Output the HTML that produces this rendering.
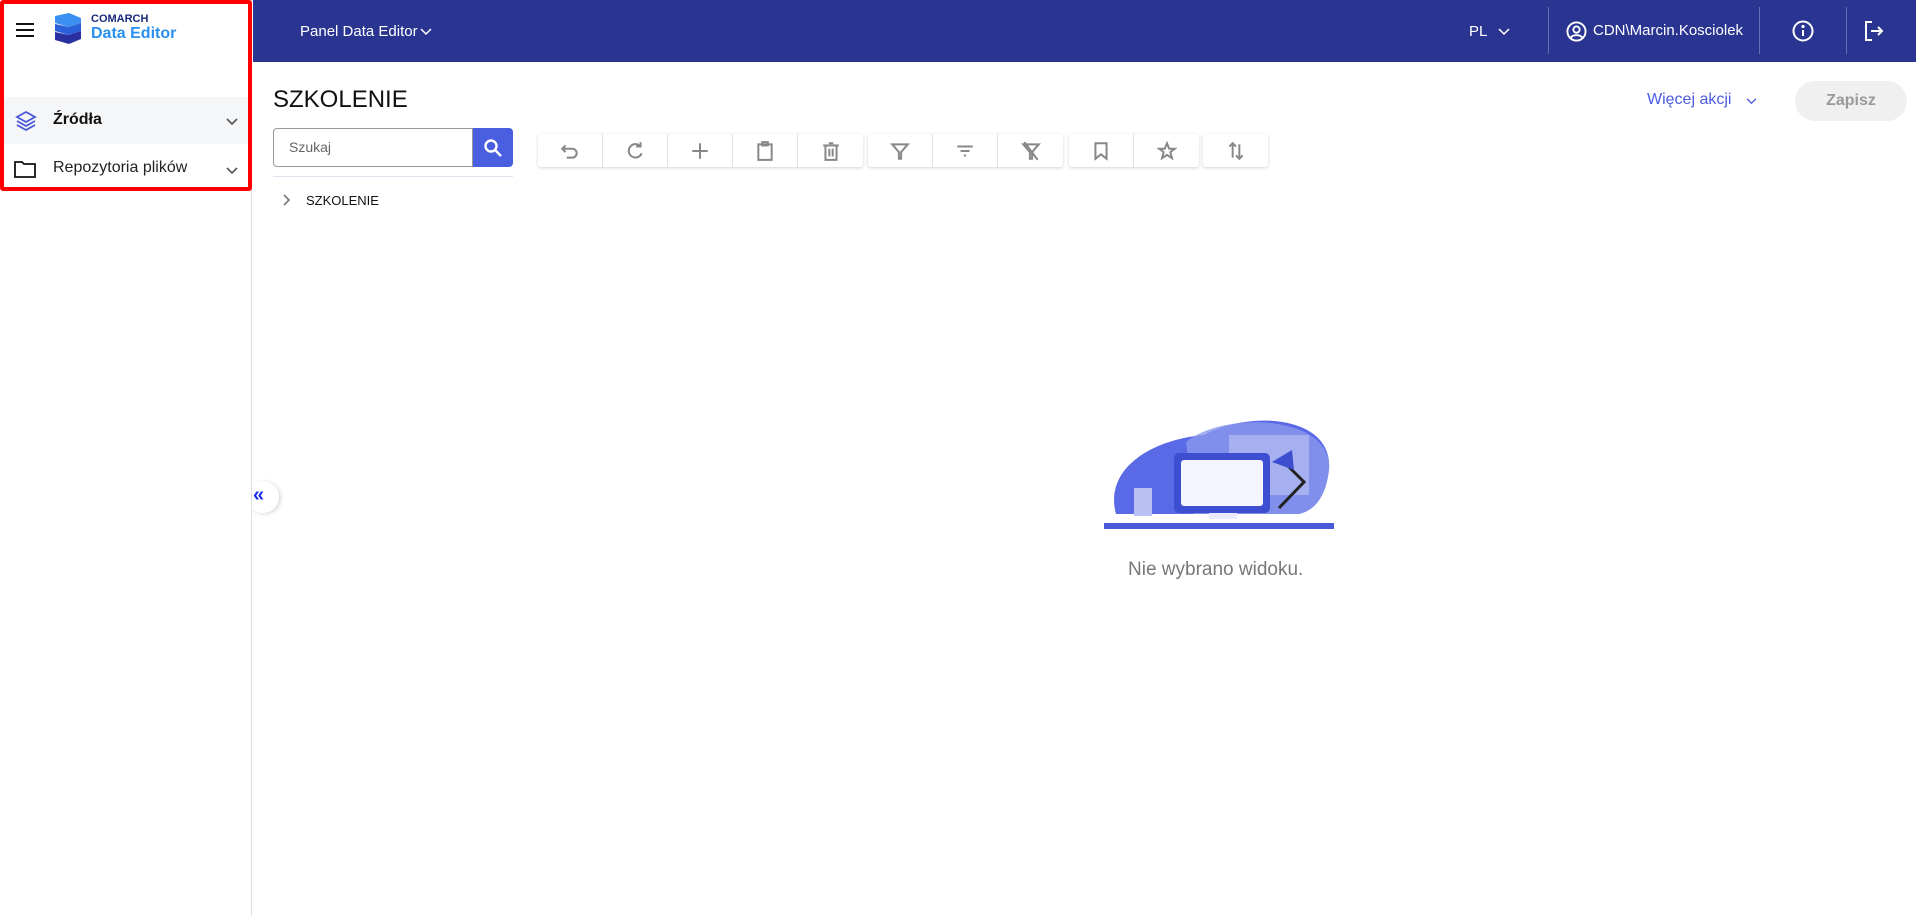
<!DOCTYPE html>
<html><head><meta charset="utf-8"><style>
*{box-sizing:border-box;margin:0;padding:0}
body{width:1916px;height:916px;overflow:hidden;background:#fff;font-family:"Liberation Sans",Arial,sans-serif;position:relative;color:#222}
.abs{position:absolute}
.hdr{left:253px;top:0;width:1663px;height:62px;background:#2a3592}
.side{left:0;top:0;width:252px;height:916px;border-right:1px solid #e0e0e0;background:#fff}
.wt{color:#fff;font-size:15px}
.vd{width:1px;background:#6670b0;top:7px;height:47px}
.tb{top:134px;height:33px;background:#fff;border-radius:3px;box-shadow:0 1px 3px rgba(0,0,0,.18);display:flex}
.tb div{width:65px;height:33px;border-right:1px solid #e2e2e2;display:flex;align-items:center;justify-content:center}
.tb div:last-child{border-right:none}
svg.i{width:20px;height:20px;fill:none;stroke:#888;stroke-width:1.8}
</style></head><body>
<div class="abs side"></div>
<div class="abs" style="left:0;top:0;width:252px;height:191px;border:4px solid #f00;border-radius:3px"></div>
<div class="abs" style="left:16px;top:23px;width:18px;height:2px;background:#111;box-shadow:0 6px 0 #111,0 12px 0 #111"></div>
<svg class="abs" style="left:53px;top:13px" width="30" height="31" viewBox="0 0 30 31"><path d="M2 3 L16 0 L28 5 L28 10 L16 14 L2 10Z" fill="#3a8ff0"/><path d="M2 11 L16 14 L28 10 L28 18 L16 22 L2 18Z" fill="#2a5fd8"/><path d="M2 19 L16 22 L28 18 L28 26 L16 31 L2 27Z" fill="#2a2fa0"/></svg>
<div class="abs" style="left:91px;top:13px;font-size:11px;font-weight:bold;color:#1b2a7a">COMARCH</div>
<div class="abs" style="left:91px;top:25px;font-size:16px;color:#2a8ff0;font-weight:bold">Data Editor</div>
<div class="abs" style="left:4px;top:97px;width:244px;height:47px;background:#f5f6f8"></div>
<svg class="abs" style="left:15px;top:110px" width="22" height="22" viewBox="0 0 22 22" fill="none" stroke="#4a57d8" stroke-width="1.8"><path d="M11 2 L20 7 L11 12 L2 7Z"/><path d="M2 11 L11 16 L20 11"/><path d="M2 15 L11 20 L20 15"/></svg>
<div class="abs" style="left:53px;top:111px;font-size:16px;font-weight:bold;color:#111">Źródła</div>
<svg class="abs" style="left:226px;top:118px" width="12" height="8" viewBox="0 0 12 8"><path d="M1 1 L6 6 L11 1" fill="none" stroke="#555" stroke-width="1.6"/></svg>
<svg class="abs" style="left:14px;top:160px" width="22" height="18" viewBox="0 0 22 18" fill="none" stroke="#111" stroke-width="1.8"><path d="M1 2 H8 L10 4 H21 V17 H1Z"/></svg>
<div class="abs" style="left:53px;top:159px;font-size:16px;color:#222">Repozytoria plików</div>
<svg class="abs" style="left:226px;top:167px" width="12" height="8" viewBox="0 0 12 8"><path d="M1 1 L6 6 L11 1" fill="none" stroke="#555" stroke-width="1.6"/></svg>
<div class="abs" style="left:247px;top:481px;width:32px;height:32px;border-radius:50%;background:#fff;box-shadow:2px 1px 4px rgba(0,0,0,.15)"></div>
<div class="abs" style="left:240px;top:470px;width:12px;height:60px;background:#fff;border-right:1px solid #e0e0e0"></div>
<div class="abs" style="left:253px;top:484px;font-size:20px;color:#1a2ee8;font-weight:bold">«</div>
<div class="abs hdr"></div>
<div class="abs wt" style="left:300px;top:23px">Panel Data Editor</div>
<svg class="abs" style="left:420px;top:28px" width="12" height="8" viewBox="0 0 12 8"><path d="M1 1 L6 6 L11 1" fill="none" stroke="#fff" stroke-width="1.5"/></svg>
<div class="abs wt" style="left:1469px;top:23px">PL</div>
<svg class="abs" style="left:1498px;top:28px" width="12" height="8" viewBox="0 0 12 8"><path d="M1 1 L6 6 L11 1" fill="none" stroke="#fff" stroke-width="1.5"/></svg>
<div class="abs vd" style="left:1548px"></div>
<svg class="abs" style="left:1566px;top:21px" width="21" height="21" viewBox="0 0 22 22" fill="none" stroke="#fff" stroke-width="2"><circle cx="11" cy="11" r="9.5"/><circle cx="11" cy="9" r="3.3"/><path d="M5 17.5 C7 14 15 14 17 17.5"/></svg>
<div class="abs wt" style="left:1593px;top:22px">CDN\Marcin.Kosciolek</div>
<div class="abs vd" style="left:1759px"></div>
<svg class="abs" style="left:1792px;top:20px" width="22" height="22" viewBox="0 0 22 22" fill="none" stroke="#fff" stroke-width="2"><circle cx="11" cy="11" r="9.5"/><path d="M11 10 V16"/><circle cx="11" cy="6.5" r=".6" fill="#fff"/></svg>
<div class="abs vd" style="left:1846px"></div>
<svg class="abs" style="left:1864px;top:21px" width="20" height="20" viewBox="0 0 20 20" fill="none" stroke="#fff" stroke-width="2"><path d="M8 1 H2 V19 H8"/><path d="M7 10 H18 M14 6 L18 10 L14 14"/></svg>
<div class="abs" style="left:273px;top:86px;font-size:24px;color:#111">SZKOLENIE</div>
<div class="abs" style="left:1647px;top:91px;font-size:16px;color:#4b5be0">Więcej akcji</div>
<svg class="abs" style="left:1746px;top:98px" width="11" height="7" viewBox="0 0 12 8"><path d="M1 1 L6 6 L11 1" fill="none" stroke="#4b5be0" stroke-width="1.5"/></svg>
<div class="abs" style="left:1795px;top:81px;width:112px;height:40px;border-radius:20px;background:#f0f0f0;color:#999;font-size:16px;font-weight:bold;text-align:center;line-height:40px">Zapisz</div>
<div class="abs" style="left:273px;top:128px;width:200px;height:39px;border:1px solid #999;border-radius:4px 0 0 4px"></div>
<div class="abs" style="left:289px;top:139px;font-size:14px;color:#666">Szukaj</div>
<div class="abs" style="left:473px;top:128px;width:40px;height:39px;background:#4a5ee0;border-radius:0 4px 4px 0"></div>
<svg class="abs" style="left:483px;top:138px" width="20" height="20" viewBox="0 0 20 20" fill="none" stroke="#fff" stroke-width="2.4"><circle cx="8" cy="8" r="5.5"/><path d="M12 12 L18 18"/></svg>
<div class="abs" style="left:273px;top:176px;width:240px;height:1px;background:#e0e3f0"></div>
<svg class="abs" style="left:283px;top:194px" width="8" height="12" viewBox="0 0 8 12"><path d="M1 1 L6 6 L1 11" fill="none" stroke="#777" stroke-width="1.6"/></svg>
<div class="abs" style="left:306px;top:193px;font-size:13px;color:#111">SZKOLENIE</div>
<div class="abs tb" style="left:538px">
<div><svg class="i" viewBox="0 0 18 18"><path d="M5 4 L2 7 L5 10"/><path d="M2 7 H11 A4 4 0 0 1 11 15 H6"/></svg></div>
<div><svg class="i" viewBox="0 0 18 18"><path d="M14 5 A6 6 0 1 0 15 11"/><path d="M14 1 V5 H10"/></svg></div>
<div><svg class="i" viewBox="0 0 18 18"><path d="M9 2 V16 M2 9 H16"/></svg></div>
<div><svg class="i" viewBox="0 0 18 18"><rect x="3" y="3" width="12" height="14"/><rect x="6.5" y="1" width="5" height="3"/></svg></div>
<div><svg class="i" viewBox="0 0 18 18"><rect x="4" y="4" width="10" height="13"/><path d="M2 4 H16 M7 2 H11 M7.5 7 V14 M10.5 7 V14"/></svg></div>
</div>
<div class="abs tb" style="left:868px">
<div><svg class="i" viewBox="0 0 18 18"><path d="M2 3 H16 L10 10 V16 H8 V10Z"/></svg></div>
<div><svg class="i" viewBox="0 0 18 18"><path d="M2 5 H16 M5 9 H13 M8 13 H10"/></svg></div>
<div><svg class="i" viewBox="0 0 18 18"><path d="M2 3 H16 L10 10 V16 H8 V10Z M3 1 L15 17"/></svg></div>
</div>
<div class="abs tb" style="left:1069px">
<div><svg class="i" viewBox="0 0 18 18"><path d="M4 2 H14 V16 L9 12 L4 16Z"/></svg></div>
<div><svg class="i" viewBox="0 0 18 18"><path d="M9 2 L11 7 H16 L12 10 L13.5 15.5 L9 12.5 L4.5 15.5 L6 10 L2 7 H7Z"/></svg></div>
</div>
<div class="abs tb" style="left:1203px;width:65px">
<div><svg class="i" viewBox="0 0 18 18"><path d="M6 15 V2 M3 5 L6 2 L9 5 M12 3 V16 M9 13 L12 16 L15 13"/></svg></div>
</div>
<svg class="abs" style="left:1104px;top:410px" width="232" height="120" viewBox="0 0 232 120">
<path d="M12 104 C0 60 45 30 100 25 C145 0 230 5 225 60 C222 85 212 100 195 104Z" fill="#5a6ae6"/>
<path d="M82 32 C120 0 230 5 225 60 C222 85 212 100 195 104 H90Z" fill="#8a98ec" opacity=".8"/>
<rect x="125" y="25" width="80" height="60" fill="#a6b0f0"/>
<rect x="70" y="43" width="96" height="60" rx="5" fill="#3d4ed0"/>
<rect x="77" y="50" width="82" height="46" rx="3" fill="#f4f5ff"/>
<rect x="105" y="103" width="28" height="6" fill="#e8eaff"/>
<path d="M175 98 L200 72 L183 55" stroke="#222" stroke-width="3" fill="none"/>
<path d="M168 52 L188 40 L190 60Z" fill="#3d4ed0"/>
<rect x="30" y="78" width="18" height="28" fill="#b8c0f4"/>
<rect x="0" y="113" width="230" height="6" fill="#4a5ad8"/>
</svg>
<div class="abs" style="left:1128px;top:559px;font-size:19px;color:#777">Nie wybrano widoku.</div>
</body></html>
